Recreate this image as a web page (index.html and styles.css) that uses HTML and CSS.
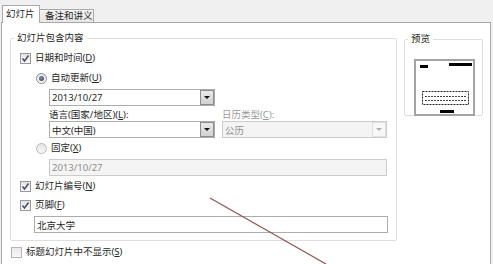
FILE: index.html
```html
<!DOCTYPE html>
<html>

<head>
    <meta charset="utf-8">
    <title>页眉和页脚</title>
    <link rel="stylesheet" href="styles.css">
</head>

<body>
    <!-- 탭 -->
    <div class="tabs">
        <div class="tab active">幻灯片</div>
        <div class="tab">备注和讲义</div>
    </div>

    <div class="panel">
        <div class="main">
            <fieldset class="group content">
                <legend>幻灯片包含内容</legend>

                <div class="row">
                    <span class="chk on"><svg width="9" height="9" viewBox="0 0 9 9"><path d="M1.5 4.5 L3.5 7 L7.5 1.5" fill="none" stroke="#3d4b66" stroke-width="1.4"/></svg></span>
                    <span>日期和时间(<u>D</u>)</span>
                </div>
                <div class="row radio-row">
                    <span class="radio on"></span>
                    <span>自动更新(<u>U</u>)</span>
                </div>

                <div class="sub">
                    <div class="select w-left">
                        <span class="val">2013/10/27</span>
                        <span class="btn"></span>
                    </div>
                    <div class="pair">
                        <div class="col">
                            <div class="lbl">语言(国家/地区)(<u>L</u>):</div>
                            <div class="select w-left">
                                <span class="val">中文(中国)</span>
                                <span class="btn"></span>
                            </div>
                        </div>
                        <div class="col off">
                            <div class="lbl">日历类型(<u>C</u>):</div>
                            <div class="select dis w-right">
                                <span class="val">公历</span>
                                <span class="btn"></span>
                            </div>
                        </div>
                    </div>
                </div>

                <div class="row radio-row fixed">
                    <span class="radio"></span>
                    <span>固定(<u>X</u>)</span>
                </div>
                <div class="sub">
                    <div class="input dis w-full">2013/10/27</div>
                </div>

                <div class="row num">
                    <span class="chk on"><svg width="9" height="9" viewBox="0 0 9 9"><path d="M1.5 4.5 L3.5 7 L7.5 1.5" fill="none" stroke="#3d4b66" stroke-width="1.4"/></svg></span>
                    <span>幻灯片编号(<u>N</u>)</span>
                </div>
                <div class="row foot">
                    <span class="chk on"><svg width="9" height="9" viewBox="0 0 9 9"><path d="M1.5 4.5 L3.5 7 L7.5 1.5" fill="none" stroke="#3d4b66" stroke-width="1.4"/></svg></span>
                    <span>页脚(<u>F</u>)</span>
                </div>
                <div class="input footer-text">北京大学</div>
            </fieldset>

            <fieldset class="group preview">
                <legend>预览</legend>
                <div class="frame">
                    <svg width="61" height="57" viewBox="0 0 61 57">
                        <rect x="1" y="1" width="59" height="55" fill="#fff" stroke="#a3a3a3" stroke-width="2"/>
                        <rect x="6" y="6" width="8" height="3" fill="#000"/>
                        <rect x="35" y="4" width="23" height="3" fill="#000"/>
                        <rect x="8.5" y="32.5" width="46" height="13" fill="none" stroke="#222" stroke-width="1" stroke-dasharray="2 1"/>
                        <line x1="11" y1="37.5" x2="52" y2="37.5" stroke="#444" stroke-dasharray="2 1"/>
                        <line x1="11" y1="41.5" x2="52" y2="41.5" stroke="#444" stroke-dasharray="2 1"/>
                        <rect x="26" y="51" width="14" height="3" fill="#000"/>
                    </svg>
                </div>
            </fieldset>
        </div>

        <div class="row last">
            <span class="chk"></span>
            <span>标题幻灯片中不显示(<u>S</u>)</span>
        </div>
    </div>

    <!-- 주석 화살표 선 -->
    <svg class="mark" width="493" height="264" viewBox="0 0 493 264">
        <line x1="210" y1="198" x2="326" y2="264" stroke="#8a5552" stroke-width="1.2"/>
    </svg>
</body>

</html>
```

FILE: styles.css
```css
/* 기본 */
html, body {
    margin: 0;
    padding: 0;
}
body {
    position: relative;
    width: 493px;
    height: 264px;
    overflow: hidden;
    background-color: #f0f0f0;
    color: #262626;
    font-family: "Noto Sans", "Noto Sans CJK SC", sans-serif;
    font-size: 9.5px;
}
u {
    text-decoration: underline;
    text-underline-offset: 1px;
}

/* 탭 */
.tabs {
    display: flex;
    align-items: flex-end;
    height: 22px;
    padding-left: 2px;
}
.tab {
    box-sizing: border-box;
    height: 13px;
    width: 54px;
    padding-left: 5px;
    line-height: 12px;
    border: 1px solid #a9a9a9;
    border-bottom: none;
    border-left: none;
    background: linear-gradient(#f2f2f2, #e6e6e6);
}
.tab.active {
    position: relative;
    z-index: 1;
    width: 38px;
    height: 18px;
    margin-bottom: -1px;
    padding-left: 3px;
    line-height: 16px;
    border-left: 1px solid #a9a9a9;
    background: #fff;
}

/* 본문 패널 */
.panel {
    box-sizing: border-box;
    width: 490px;
    height: 242px;
    margin-left: 1px;
    padding: 9px 0 0 8px;
    border: 1px solid #a8a8a8;
    border-bottom: none;
    background-color: #fff;
}
.main {
    display: flex;
    gap: 7px;
}

/* 그룹박스 */
.group {
    box-sizing: border-box;
    margin: 0;
    padding: 6px 0 7px 9px;
    border: 1px solid #dedede;
    border-radius: 2px;
    min-inline-size: 0;
}
.group legend {
    margin-left: -6px;
    padding: 0 3px;
    line-height: 12px;
}
.content {
    width: 387px;
}
.preview {
    width: 79px;
    height: 83px;
    margin-top: 1px;
}
.frame {
    margin-top: 8px;
    height: 57px;
}
.frame svg {
    display: block;
}

/* 행 */
.row {
    display: flex;
    align-items: center;
    gap: 4px;
    height: 16px;
    line-height: 16px;
}
.radio-row {
    margin-top: 4px;
    margin-left: 16px;
}
.radio-row.fixed {
    margin-top: 2px;
}
.num {
    margin-top: 2px;
}
.foot {
    margin-top: 3px;
}
.last {
    margin-top: 3px;
    margin-left: 1px;
}

/* 체크박스, 라디오 */
.chk {
    box-sizing: border-box;
    display: flex;
    align-items: center;
    justify-content: center;
    width: 11px;
    height: 11px;
    border: 1px solid #999;
    background: linear-gradient(#e4e4e4, #f6f6f6);
}
.last .chk {
    border-color: #b4b4b4;
    background: linear-gradient(#e9e9e9, #f8f8f8);
}
.radio {
    box-sizing: border-box;
    display: flex;
    align-items: center;
    justify-content: center;
    width: 11px;
    height: 11px;
    border: 1px solid #b9b9b9;
    border-radius: 50%;
    background: linear-gradient(#e6e6e6, #f7f7f7);
}
.radio.on {
    border-color: #8f8f8f;
}
.radio.on::after {
    content: "";
    width: 5px;
    height: 5px;
    border-radius: 50%;
    background: radial-gradient(circle at 40% 35%, #7e8fb0, #2c3a57);
}

/* 드롭다운, 입력칸 */
.sub {
    margin-left: 29px;
    margin-top: 3px;
}
.select,
.input {
    box-sizing: border-box;
    display: flex;
    align-items: center;
    height: 17px;
    padding-left: 2px;
    border: 1px solid #acacac;
    background-color: #fff;
}
.select .val {
    flex: 1;
}
.btn {
    box-sizing: border-box;
    display: flex;
    align-items: center;
    justify-content: center;
    width: 14px;
    height: 15px;
    border: 1px solid #8d8d8d;
    background: linear-gradient(#e9e9e9, #d2d2d2);
}
.btn::after {
    content: "";
    border-left: 3px solid transparent;
    border-right: 3px solid transparent;
    border-top: 3px solid #111;
}
.w-left {
    width: 166px;
}
.w-right {
    width: 165px;
}
.w-full {
    width: 338px;
}
.pair {
    display: flex;
    gap: 7px;
    margin-top: 3px;
}
.lbl {
    height: 12px;
    line-height: 12px;
}
.off .lbl {
    color: #9a9a9a;
}
.dis {
    border-color: #cbcbcb;
    background-color: #f4f4f4;
    color: #8e8e8e;
}
.dis .btn {
    border-color: #e0e0e0;
    background: #f7f7f7;
}
.dis .btn::after {
    border-top-color: #b0b0b0;
}
.input.dis {
    margin-top: 3px;
}
.footer-text {
    width: 354px;
    margin-top: 3px;
    margin-left: 14px;
}

/* 주석선 (덮어 그림) */
.mark {
    position: absolute;
    top: 0;
    left: 0;
    pointer-events: none;
}
```
